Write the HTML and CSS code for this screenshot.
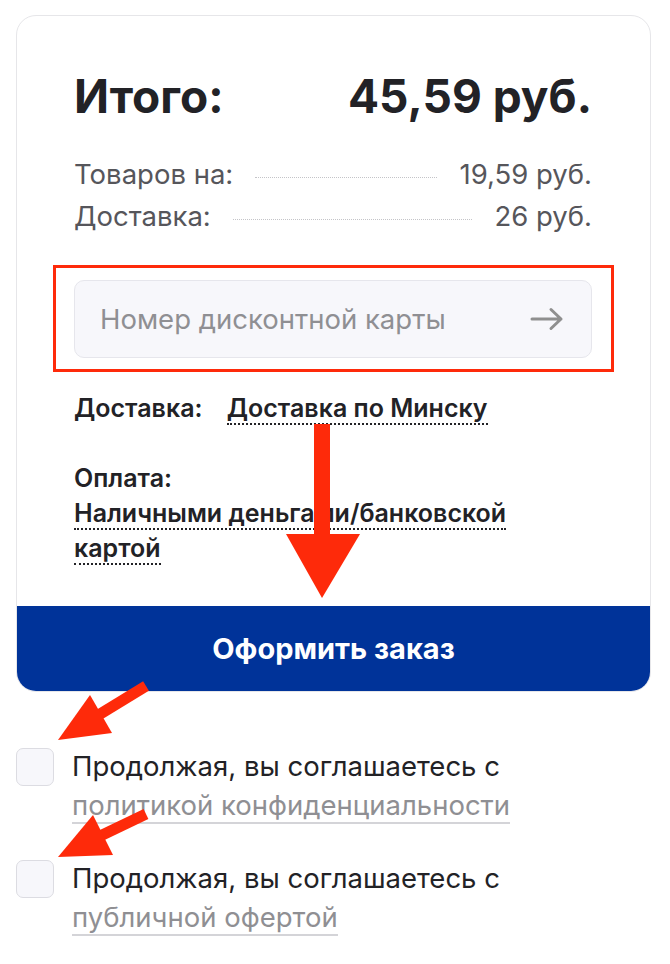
FILE: index.html
```html
<!DOCTYPE html>
<html>
<head>
    <title>Итого</title>
    <link rel="stylesheet" href="styles.css">
</head>
<body>
    <div class="page">
        <div class="summary">
            <div class="summary-body">
                <div class="total">
                    <span>Итого:</span>
                    <span>45,59 руб.</span>
                </div>
                <div class="line">
                    <span>Товаров на:</span>
                    <span class="dots"></span>
                    <span>19,59 руб.</span>
                </div>
                <div class="line">
                    <span>Доставка:</span>
                    <span class="dots"></span>
                    <span>26 руб.</span>
                </div>

                <div class="card-field">
                    <input type="text" placeholder="Номер дисконтной карты">
                    <svg class="card-go" width="34" height="24" viewBox="0 0 34 24">
                        <path d="M2 12H31M21 2.5L31 12L21 21.5" fill="none" stroke="#8f8f8f" stroke-width="3" stroke-linecap="round" stroke-linejoin="round"/>
                    </svg>
                </div>

                <div class="delivery">
                    <span class="label">Доставка:</span>
                    <span class="choice">Доставка по Минску</span>
                </div>
                <div class="payment">
                    <div class="label">Оплата:</div>
                    <span class="choice">Наличными деньгами/банковской картой</span>
                </div>
            </div>
            <button class="order-btn">Оформить заказ</button>
        </div>

        <label class="agree">
            <span class="check"></span>
            <span class="agree-text">Продолжая, вы соглашаетесь с <a href="#">политикой конфиденциальности</a></span>
        </label>
        <label class="agree">
            <span class="check"></span>
            <span class="agree-text">Продолжая, вы соглашаетесь с <a href="#">публичной офертой</a></span>
        </label>
    </div>

    <!-- пометки поверх скриншота -->
    <svg class="marks" width="670" height="964" viewBox="0 0 670 964">
        <rect x="54.5" y="266.5" width="558" height="104" fill="none" stroke="#fe2a0a" stroke-width="3"/>
        <rect x="314" y="424" width="16" height="116" fill="#fe2a0a"/>
        <polygon points="286,534 360,534 322,598" fill="#fe2a0a"/>
        <line x1="146" y1="686" x2="92" y2="719" stroke="#fe2a0a" stroke-width="11"/>
        <polygon points="58,740 112,733 90,695" fill="#fe2a0a"/>
        <line x1="146" y1="814" x2="96" y2="838" stroke="#fe2a0a" stroke-width="11"/>
        <polygon points="58,857 113,855 93,815" fill="#fe2a0a"/>
    </svg>
</body>
</html>
```

FILE: styles.css
```css
body {
    margin: 0;
    position: relative;
    font-family: Inter, "Noto Sans", sans-serif;
    color: #222226;
    background: #fff;
}
.page {
    width: 635px;
    padding: 15px 0 0 16px;
}
.summary {
    border: 1px solid #e6e6e9;
    border-radius: 20px;
    overflow: hidden;
}
.summary-body {
    padding: 52px 58px 40px 57px;
}
.total {
    display: flex;
    justify-content: space-between;
    font-size: 46px;
    font-weight: 700;
    line-height: 56px;
}
.line {
    display: flex;
    align-items: center;
    gap: 22px;
    font-size: 27.5px;
    line-height: 42px;
    color: #56565b;
}
.total + .line {
    margin-top: 29px;
}
.dots {
    flex: 1;
    height: 0;
    margin-top: 6px;
    border-top: 1px dotted #c4c4c8;
}
.card-field {
    display: flex;
    align-items: center;
    margin-top: 43px;
    height: 78px;
    box-sizing: border-box;
    border: 1px solid #e6e6ec;
    border-radius: 10px;
    background: #f7f7fb;
    padding: 0 27px 0 23px;
}
.card-field input {
    flex: 1;
    min-width: 0;
    border: none;
    outline: none;
    background: transparent;
    font-family: inherit;
    font-size: 27.5px;
    color: #222;
}
.card-field input::placeholder {
    color: #8f8f93;
}
.delivery {
    margin-top: 33px;
    font-size: 25px;
    font-weight: 600;
    line-height: 35px;
}
.delivery .label {
    margin-right: 18px;
}
.choice {
    border-bottom: 2px dotted #222226;
}
.payment {
    margin-top: 35px;
    font-size: 25px;
    font-weight: 600;
    line-height: 35px;
    width: 470px;
}
.order-btn {
    display: block;
    width: 100%;
    height: 85px;
    border: none;
    background: #003399;
    color: #fff;
    font-family: inherit;
    font-size: 29px;
    font-weight: 700;
    cursor: pointer;
}
.agree {
    display: flex;
    gap: 18px;
    margin-top: 55px;
    font-size: 27.5px;
    line-height: 39px;
    cursor: pointer;
}
.agree + .agree {
    margin-top: 34px;
}
.check {
    flex: none;
    width: 36px;
    height: 36px;
    margin-top: 1px;
    border: 1px solid #dcdce2;
    border-radius: 7px;
    background: #f7f7fb;
}
.agree-text {
    width: 470px;
}
.agree-text a {
    color: #8f8f93;
    text-decoration: none;
    border-bottom: 2px solid #d4d4d8;
}
.marks {
    position: absolute;
    top: 0;
    left: 0;
    pointer-events: none;
}
```
